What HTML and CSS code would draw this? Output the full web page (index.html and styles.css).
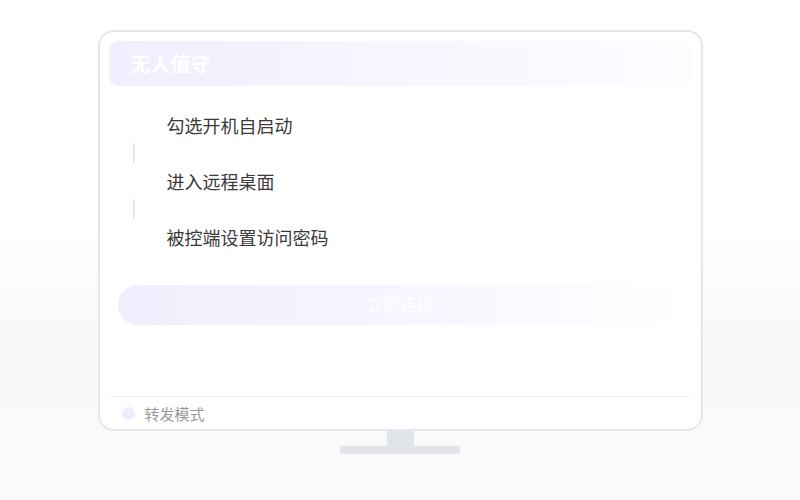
FILE: index.html
```html
<!DOCTYPE html>
<html lang="zh-CN">
<head>
    <meta charset="UTF-8">
    <meta name="viewport" content="width=device-width, initial-scale=1.0">
    <title>无人值守</title>
    <link rel="stylesheet" href="styles.css">
</head>
<body>
    <div class="monitor">
        <div class="screen">
            <div class="header">无人值守</div>
            <ul class="steps">
                <li class="step">勾选开机自启动</li>
                <li class="connector"></li>
                <li class="step">进入远程桌面</li>
                <li class="connector"></li>
                <li class="step">被控端设置访问密码</li>
            </ul>
            <button class="connect">立即连接</button>
            <div class="footer">
                <span class="dot"></span>
                <span class="mode">转发模式</span>
            </div>
        </div>
        <div class="neck"></div>
        <div class="base"></div>
    </div>
</body>
</html>
```

FILE: styles.css
```css
body { margin: 0; padding-top: 30px; height: 500px; box-sizing: border-box; font-family: "Noto Sans CJK SC", "Noto Sans", sans-serif; background: linear-gradient(to bottom, #fff 0, #fff 230px, #f8f9fa 330px, #f9fafb 100%); }
.monitor { width: 605px; margin: 0 auto; display: flex; flex-direction: column; align-items: center; }
.screen { width: 100%; height: 401px; box-sizing: border-box; border: 2px solid #e3e6ea; border-radius: 16px; background: #fff; padding: 9px 9px 0; display: flex; flex-direction: column; }
.header { height: 45px; border-radius: 10px; padding-left: 22px; display: flex; align-items: center; color: #fff; font-size: 20px; font-weight: bold; background: linear-gradient(to right, #f1eefe 0%, #f7f5ff 45%, #fdfcff 100%); }
.steps { list-style: none; margin: 27px 0 0; padding: 0 0 0 24px; }
.step { line-height: 24px; height: 24px; font-size: 18px; color: #3a3a3a; padding-left: 34px; }
.connector { width: 2px; height: 20px; margin: 6px 0; background: #e6e8ed; }
.connect { margin: 36px 9px 0; height: 40px; padding: 0 0 3px; line-height: 36px; border: none; border-radius: 20px; font-family: inherit; font-size: 17px; color: #fff; background: linear-gradient(to right, #f1eefd 0%, #f7f5ff 50%, rgba(255, 255, 255, 0) 100%); }
.footer { margin-top: auto; height: 32px; border-top: 1px solid #eef0f3; display: flex; align-items: center; padding-left: 13px; }
.dot { width: 13px; height: 13px; border-radius: 50%; background: #efebfd; margin-right: 10px; }
.mode { font-size: 15px; color: #999; }
.neck { width: 27px; height: 15px; background: #e1e5e9; }
.base { width: 120px; height: 8px; background: #e1e5e9; }
```
